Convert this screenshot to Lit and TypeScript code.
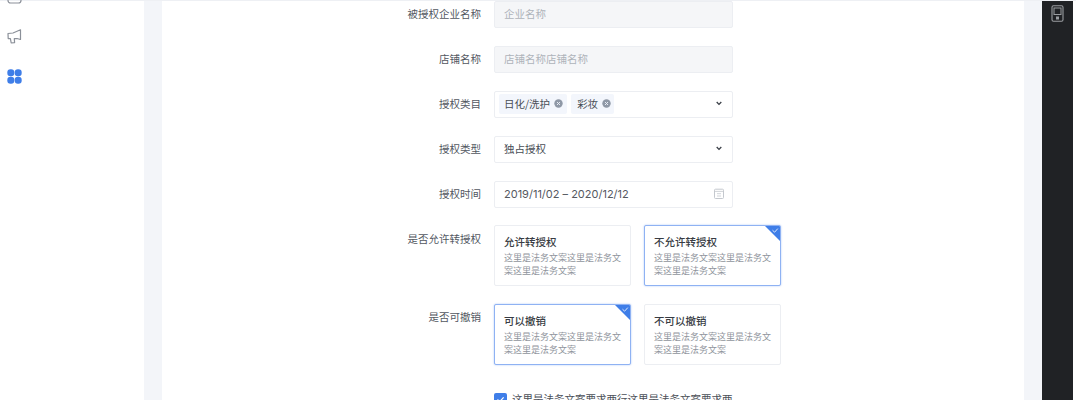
import { LitElement, html, css } from "lit";
import { customElement } from "lit/decorators.js";

const chevron = html`<svg class="chev" width="6" height="5" viewBox="0 0 6 5"><path d="M0.7 1 L3 3.4 L5.3 1" fill="none" stroke="#3a3f47" stroke-width="1.3"/></svg>`;
const closeIcon = html`<svg class="x" width="9" height="9" viewBox="0 0 9 9"><circle cx="4.5" cy="4.5" r="4.2" fill="#8f98a6"/><path d="M3 3 L6 6 M6 3 L3 6" stroke="#eef3fb" stroke-width="0.9"/></svg>`;

@customElement("app-root")
export class AppRoot extends LitElement {
  static styles = css`
    :host { display: block; width: 1076px; height: 400px; overflow: hidden; background: #fff;
      font-family: "Noto Sans CJK SC", "Inter", sans-serif; color: #4a4f57; }
    .page { display: flex; height: 400px; box-sizing: border-box; border-top: 1px solid #eef0f4; }
    .side { width: 144px; flex: none; display: flex; flex-direction: column; align-items: flex-start; padding-left: 7px; box-sizing: border-box; gap: 25px; overflow: hidden; margin-top: -1px; }
    .side svg { display: block; flex: none; }
    .side .clip { height: 4px; overflow: hidden; display: flex; align-items: flex-end; }
    .main { flex: none; width: 898px; background: #f3f5f9; padding: 0 18px; box-sizing: border-box; overflow: hidden; }
    .card { background: #fff; height: 100%; width: 862px; padding-left: 232px; box-sizing: border-box; overflow: hidden; }
    .row { display: flex; align-items: flex-start; margin-bottom: 18px; }
    .row.choice { margin-top: -1px; margin-bottom: 18px; }
    .row.choice + .row.choice { margin-top: 0; }
    .label { width: 87px; text-align: right; font-size: 10.5px; line-height: 25px; margin-right: 13px; color: #52575f; white-space: nowrap; }
    .choice .label { line-height: 27px; }
    .choice + .choice .label { line-height: 25px; }
    .field { width: 239px; height: 27px; box-sizing: border-box; border: 1px solid #eceef2; border-radius: 2px; display: flex; align-items: center; padding: 0 8px 2px 9px; font-size: 10.5px; color: #484d55; background: #fff; }
    .field.disabled { background: #f5f6f8; color: #aeb3ba; }
    .field.tags { padding: 0 8px 2px 4px; gap: 5px; }
    .chev { margin-left: auto; margin-right: 2px; }
    .tag { display: flex; align-items: center; gap: 4px; height: 20px; padding: 0 4px 0 5px; background: #f3f6fc; border-radius: 2px; white-space: nowrap; }
    .tag + .tag { margin-left: -1px; padding-left: 6px; padding-right: 3px; }
    .date { font-family: "Inter", "Noto Sans CJK SC", sans-serif; font-size: 11px; color: #55595f; }
    .cal { margin-left: auto; }
    .opts { display: flex; gap: 13px; }
    .opt { position: relative; width: 137px; height: 61px; box-sizing: border-box; border: 1px solid #eceef2; border-radius: 2px; padding: 9px 9px 0; overflow: hidden; background: #fff; }
    .opt.on { border: 1px solid #8fb2f3; box-shadow: 0 0 2px #a9c4f5; }
    .opt h4 { margin: 0 0 2px; font-size: 10.5px; line-height: 14px; font-weight: 500; color: #383c43; }
    .opt p { margin: 0; font-size: 9px; line-height: 13px; color: #8f949c; width: 119px; }
    .corner { position: absolute; top: 0; right: 0; width: 15px; height: 15px; }
    .check { display: flex; align-items: center; gap: 5px; margin-left: 100px; margin-top: 27px; font-size: 10.5px; line-height: 14px; color: #4b5058; white-space: nowrap; }
    .box { width: 13px; height: 13px; border-radius: 2px; background: #3f7ee8; display: flex; align-items: center; justify-content: center; flex: none; }
    .dark { width: 31px; flex: none; background: #202225; display: flex; justify-content: center; padding-top: 4px; box-sizing: border-box; }
    .dark svg { display: block; }
    .end { flex: 1; background: #fff; }
  `;

  private opt(title: string, on: boolean) {
    return html`<div class="opt ${on ? "on" : ""}">
      <h4>${title}</h4>
      <p>这里是法务文案这里是法务文案这里是法务文案</p>
      ${on ? html`<svg class="corner" viewBox="0 0 15 15"><path d="M0 0 H15 V15 Z" fill="#3f7ee8"/><path d="M7.5 4.2 L9.6 6.2 L12.8 2.6" fill="none" stroke="#dbe7fb" stroke-width="1"/></svg>` : ""}
    </div>`;
  }

  render() {
    return html`<div class="page">
      <div class="side">
        <div class="clip"><svg width="15" height="15" viewBox="0 0 15 15"><rect x="1" y="1" width="13" height="13" rx="2.5" fill="none" stroke="#8b9099" stroke-width="1.2"/></svg></div>
        <svg width="15" height="15" viewBox="0 0 15 15"><path d="M1 4.5 L6 4 L13.5 0.8 V10.5 L10 9.5 L7.3 9.6 L7.6 13.6 L4.2 14 L3.4 9.6 L1.2 9.6 Z" fill="none" stroke="#8b9099" stroke-width="1.2" stroke-linejoin="round"/></svg>
        <svg width="15" height="15" viewBox="0 0 15 15"><g fill="#3f7ee8"><rect x="0.3" y="0.3" width="7" height="7" rx="3.2"/><rect x="7.7" y="0.3" width="7" height="7" rx="3.2"/><rect x="0.3" y="7.7" width="7" height="7" rx="3.2"/><rect x="7.7" y="7.7" width="7" height="7" rx="3.2"/></g></svg>
      </div>
      <div class="main"><div class="card">
        <div class="row"><div class="label">被授权企业名称</div><div class="field disabled">企业名称</div></div>
        <div class="row"><div class="label">店铺名称</div><div class="field disabled">店铺名称店铺名称</div></div>
        <div class="row"><div class="label">授权类目</div><div class="field tags">
          <span class="tag">日化/洗护 ${closeIcon}</span><span class="tag">彩妆 ${closeIcon}</span>${chevron}
        </div></div>
        <div class="row"><div class="label">授权类型</div><div class="field">独占授权${chevron}</div></div>
        <div class="row"><div class="label">授权时间</div><div class="field"><span class="date">2019/11/02 – 2020/12/12</span>
          <svg class="cal" width="10" height="11" viewBox="0 0 10 11"><rect x="0.5" y="1.2" width="9" height="9.3" rx="1" fill="none" stroke="#c4c8ce"/><path d="M0.5 3.4 H9.5 M3 5.7 H7 M3 8 H7" stroke="#c4c8ce" stroke-width="0.8"/></svg>
        </div></div>
        <div class="row choice"><div class="label">是否允许转授权</div><div class="opts">${this.opt("允许转授权", false)}${this.opt("不允许转授权", true)}</div></div>
        <div class="row choice"><div class="label">是否可撤销</div><div class="opts">${this.opt("可以撤销", true)}${this.opt("不可以撤销", false)}</div></div>
        <div class="check"><span class="box"><svg width="9" height="9" viewBox="0 0 9 9"><path d="M1.5 4.5 L3.7 6.7 L7.6 2.3" fill="none" stroke="#fff" stroke-width="1.2"/></svg></span>这里是法务文案要求两行这里是法务文案要求两</div>
      </div></div>
      <div class="dark"><svg width="13" height="17" viewBox="0 0 13 17"><rect x="1" y="0.7" width="11" height="15.6" rx="1.5" fill="none" stroke="#9a9da1" stroke-width="1.1"/><rect x="3" y="3" width="7" height="6.5" fill="none" stroke="#9a9da1" stroke-width="1"/><rect x="5" y="11.5" width="3" height="3" fill="#9a9da1"/></svg></div>
      <div class="end"></div>
    </div>`;
  }
}
